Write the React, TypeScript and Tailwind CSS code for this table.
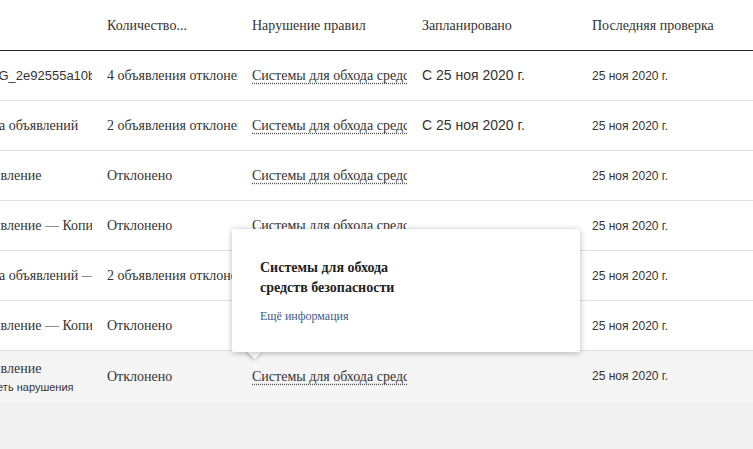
import React from 'react';

type Row = {
  name: string;
  nameClass?: string;
  sub?: string;
  count: string;
  planned?: string;
  checked: string;
  hover?: boolean;
};

const serif = 'font-[Liberation_Serif,serif]';
const sans = 'font-[Liberation_Sans,Arial,sans-serif]';
const cols = 'grid grid-cols-[130px_145px_170px_170px_1fr]';

const rows: Row[] = [
  { name: 'IMG_2e92555a10b4f1c', nameClass: `${sans} text-[13px] pl-[14px]`, count: '4 объявления отклонено', planned: 'С 25 ноя 2020 г.', checked: '25 ноя 2020 г.' },
  { name: 'Группа объявлений', nameClass: 'ml-[-7px]', count: '2 объявления отклонено', planned: 'С 25 ноя 2020 г.', checked: '25 ноя 2020 г.' },
  { name: 'Объявление', count: 'Отклонено', checked: '25 ноя 2020 г.' },
  { name: 'Объявление — Копия', count: 'Отклонено', checked: '25 ноя 2020 г.' },
  { name: 'Группа объявлений — Копия', nameClass: 'ml-[-7px]', count: '2 объявления отклонено', checked: '25 ноя 2020 г.' },
  { name: 'Объявление — Копия', count: 'Отклонено', checked: '25 ноя 2020 г.' },
  { name: 'Объявление', sub: 'Посмотреть нарушения', count: 'Отклонено', checked: '25 ноя 2020 г.', hover: true },
];

export default function App() {
  return (
    <div className="relative h-[449px] w-[753px] overflow-hidden bg-[#f1f1f1] text-[#333]">
      <div className={`${serif} ml-[-30px] w-[783px]`}>
        {/* header */}
        <div className={`${cols} h-[51px] items-center border-b border-[#2a2a2a] bg-white text-[14px]`}>
          <div />
          <div className="pl-[7px]">Количество...</div>
          <div className="pl-[7px]">Нарушение правил</div>
          <div className="pl-[7px]">Запланировано</div>
          <div className="pl-[7px]">Последняя проверка</div>
        </div>

        {rows.map((r, i) => (
          <div
            key={i}
            className={`${cols} h-[50px] items-center text-[14px] ${r.hover ? 'bg-[#f5f5f6]' : 'bg-white border-b border-[#e0e0e0]'}`}
          >
            <div className="pr-[8px]">
              <div className="overflow-hidden whitespace-nowrap">
                <div className={r.nameClass ?? ''}>{r.name}</div>
                {r.sub && <div className={`${sans} ml-[-17px] text-[11px] leading-[16px]`}>{r.sub}</div>}
              </div>
            </div>
            <div className="pl-[7px] pr-[7px]">
              <div className="overflow-hidden whitespace-nowrap">{r.count}</div>
            </div>
            <div className="pl-[7px] pr-[8px]">
              <div className="overflow-hidden whitespace-nowrap">
                <span className="underline decoration-dotted decoration-[#555] underline-offset-[3px]">
                  Системы для обхода средств безопасности
                </span>
              </div>
            </div>
            <div className={`${sans} whitespace-nowrap pl-[7px]`}>{r.planned ?? ''}</div>
            <div className={`${sans} whitespace-nowrap pl-[7px] text-[12px]`}>{r.checked}</div>
          </div>
        ))}
      </div>

      {/* tooltip */}
      <div className="absolute left-[232px] top-[229px] w-[348px]">
        <div className="absolute bottom-[-5px] left-[17px] h-[11px] w-[11px] rotate-45 bg-white shadow-[0_1px_4px_rgba(0,0,0,0.3)]" />
        <div className={`${serif} relative z-10 h-[123px] rounded-[2px] bg-white pl-[28px] pt-[29px] shadow-[0_1px_6px_rgba(0,0,0,0.28)]`}>
          <div className="w-[160px] text-[14px] font-bold leading-[20px] text-[#222]">
            Системы для обхода средств безопасности
          </div>
          <div className="mt-[9px] text-[12px] text-[#3f5a8a]">Ещё информация</div>
        </div>
      </div>
    </div>
  );
}
